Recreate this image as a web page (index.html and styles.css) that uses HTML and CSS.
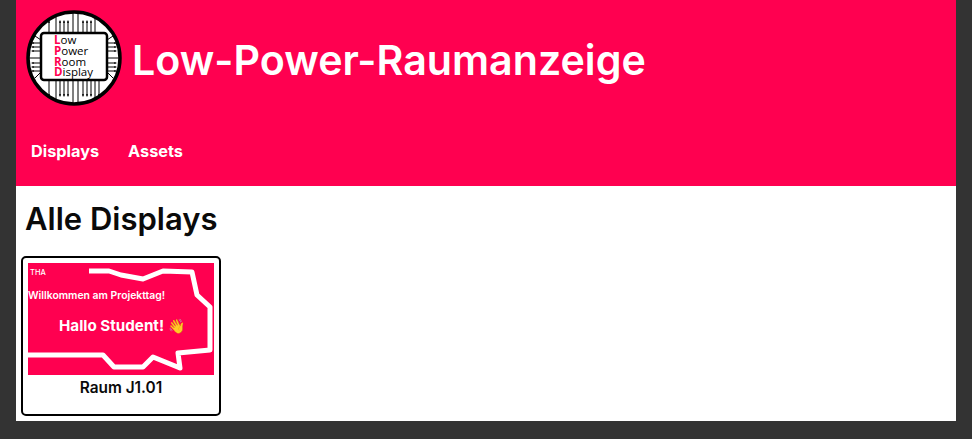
FILE: index.html
```html
<!DOCTYPE html>
<html lang="de">
<head>
<meta charset="utf-8">
<title>Low-Power-Raumanzeige</title>
<link rel="stylesheet" href="styles.css">
</head>
<body>
<div class="page">
  <header class="header">
    <div class="brand">
      <svg class="logo" viewBox="0 0 96 96" aria-hidden="true">
        <defs>
          <marker id="arrow" viewBox="0 0 4 4" refX="1" refY="2" markerWidth="2.600" markerHeight="2.600" markerUnits="strokeWidth" orient="auto">
            <path d="M0 0L4 2L0 4z" fill="#000"/>
          </marker>
        </defs>
        <circle cx="48" cy="48" r="46" fill="#fff" stroke="#000" stroke-width="3.5"/>
        <g class="logo-traces">
          <path d="M30 23V4M47 23V3M52 23V3M69 23V8M30 70V91M47 70V93M52 70V93M69 70V88M15 48H3M81 48H93M15 30L9 26M81 30L87 26M15 62L9 68M81 62L87 68"/>
        </g>
        <g class="logo-arrows">
          <path d="M23 23V12"/><path d="M34 23V12"/><path d="M38 23V12"/><path d="M42 23V12"/>
          <path d="M57 23V12"/><path d="M61 23V12"/><path d="M65 23V12"/>
          <path d="M23 70V85"/><path d="M34 70V85"/><path d="M38 70V85"/><path d="M42 70V85"/>
          <path d="M57 70V85"/><path d="M61 70V85"/><path d="M65 70V85"/><path d="M73 70V85"/>
          <path d="M15 33H7"/><path d="M15 37H7"/><path d="M15 41H7"/>
          <path d="M15 53H7"/><path d="M15 57H7"/><path d="M15 61H7"/>
          <path d="M81 33H89"/><path d="M81 37H89"/><path d="M81 41H89"/>
          <path d="M81 53H89"/><path d="M81 57H89"/><path d="M81 61H89"/>
        </g>
        <rect class="logo-chip" x="15" y="23" width="66" height="47" rx="3"/>
        <text class="logo-text" x="28" y="34"><tspan class="logo-initial">L</tspan>ow</text>
        <text class="logo-text" x="28" y="45"><tspan class="logo-initial">P</tspan>ower</text>
        <text class="logo-text" x="28" y="56"><tspan class="logo-initial">R</tspan>oom</text>
        <text class="logo-text" x="28" y="66"><tspan class="logo-initial">D</tspan>isplay</text>
      </svg>
      <h1 class="title">Low-Power-Raumanzeige</h1>
    </div>
    <nav class="nav">
      <a class="nav-link" href="#">Displays</a>
      <a class="nav-link" href="#">Assets</a>
    </nav>
  </header>
  <main class="main">
    <h2 class="heading">Alle Displays</h2>
    <div class="cards">
      <a class="card" href="#">
        <svg class="thumb" viewBox="0 0 186 112" role="img" aria-label="Vorschau">
          <rect width="186" height="112" fill="#ff0050"/>
          <path class="thumb-line" d="M61 8H81L93 12L115 16L135 8L164 9L169 32L182 44V87L150 90L152 105L125 94L115 104H86L75 92H0"/>
          <text class="thumb-tha" x="2" y="12">THA</text>
          <text class="thumb-welcome" x="0" y="36">Willkommen am Projekttag!</text>
          <text class="thumb-hello" x="31" y="68">Hallo Student! <tspan class="thumb-emoji">👋</tspan></text>
        </svg>
        <span class="card-label">Raum J1.01</span>
      </a>
    </div>
  </main>
</div>
</body>
</html>
```
FILE: styles.css
```css
* {
  box-sizing: border-box;
}

html,
body {
  margin: 0;
  height: 100%;
}

body {
  background: #333333;
  font-family: Inter, "Liberation Sans", sans-serif;
  color: #0a0a0a;
  overflow: hidden;
}

.page {
  margin: 0 16px;
}

.header {
  background: #ff0050;
  height: 186px;
  display: flex;
  flex-direction: column;
}

.brand {
  display: flex;
  align-items: center;
  gap: 10px;
  padding: 10px 0 0 10px;
}

.logo {
  width: 96px;
  height: 96px;
  flex: none;
}

.logo-traces path,
.logo-arrows path {
  fill: none;
  stroke: #000;
  stroke-width: 1;
}

.logo-arrows path {
  marker-end: url(#arrow);
}

.logo-chip {
  fill: #fff;
  stroke: #000;
  stroke-width: 2.5;
}

.logo-text {
  font-family: "Open Sans", "Liberation Sans", sans-serif;
  font-size: 11.5px;
  font-weight: 500;
  fill: #000;
}

.logo-initial {
  fill: #ff0050;
  font-weight: 700;
}

.title {
  margin: 0;
  padding-top: 3px;
  color: #fff;
  font-size: 41.2px;
  font-weight: 600;
  line-height: 48px;
  white-space: nowrap;
}

.nav {
  display: flex;
  gap: 29px;
  padding: 35px 0 0 15px;
}

.nav-link {
  color: #fff;
  font-size: 16.3px;
  font-weight: 700;
  line-height: 20px;
  text-decoration: none;
}

.main {
  background: #fff;
  height: 235px;
  padding: 16px 5px 0;
}

.heading {
  margin: 0 0 0 4px;
  font-size: 31px;
  font-weight: 600;
  line-height: 34px;
}

.cards {
  display: flex;
  margin-top: 20px;
}

.card {
  width: 200px;
  height: 160px;
  padding: 5px 5px 0;
  border: 2px solid #000;
  border-radius: 5px;
  display: flex;
  flex-direction: column;
  align-items: center;
  color: #0a0a0a;
  text-decoration: none;
}

.thumb {
  width: 186px;
  height: 112px;
  flex: none;
  display: block;
}

.thumb-line {
  fill: none;
  stroke: #fff;
  stroke-width: 5;
  stroke-linejoin: round;
}

.thumb-tha {
  fill: #fff;
  font-size: 7.5px;
  font-weight: 500;
}

.thumb-welcome {
  fill: #fff;
  font-size: 10.4px;
  font-weight: 600;
}

.thumb-hello {
  fill: #fff;
  font-size: 15.2px;
  font-weight: 700;
}

.thumb-emoji {
  font-size: 14px;
}

.card-label {
  font-size: 15.4px;
  font-weight: 600;
  line-height: 26px;
}
```
